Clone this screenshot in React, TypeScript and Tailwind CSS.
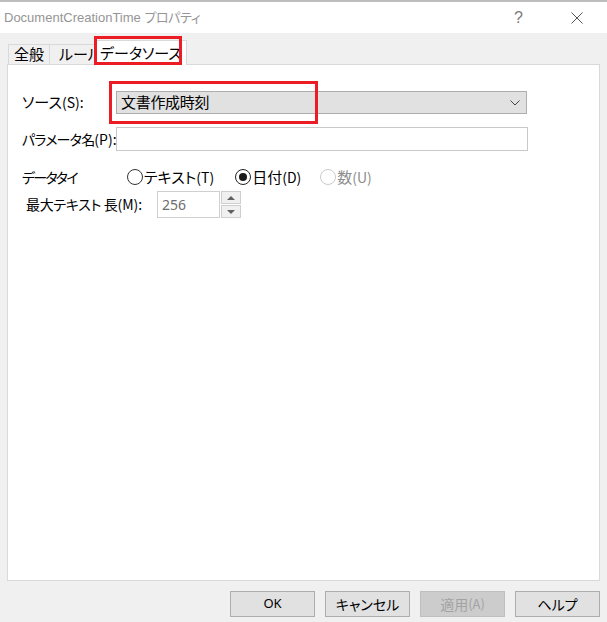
import React from "react";

const jp = "font-['Noto_Sans_CJK_JP','Noto_Sans',sans-serif] [font-feature-settings:'palt']";

function Radio({ checked, disabled, label, k }: { checked?: boolean; disabled?: boolean; label: string; k: string }) {
  return (
    <div className={`flex items-center whitespace-nowrap ${disabled ? "text-[#8d8d8d]" : "text-black"}`}>
      <span
        className={`w-[16px] h-[16px] rounded-full bg-white flex items-center justify-center ${
          disabled ? "border border-[#cccccc]" : checked ? "border-[1.5px] border-[#222222]" : "border border-[#333333]"
        }`}
      >
        {checked && <span className="w-[8px] h-[8px] rounded-full bg-[#1a1a1a]" />}
      </span>
      <span className="ml-[1px]">
        {label}
        <span className="text-[14px]">({k})</span>
      </span>
    </div>
  );
}

function Btn({ children, disabled }: { children: React.ReactNode; disabled?: boolean }) {
  return (
    <div
      className={`w-[85px] h-[26px] border flex items-center justify-center text-[14px] whitespace-nowrap ${
        disabled ? "bg-[#cccccc] border-[#bfbfbf] text-[#a3a3a3]" : "bg-[#e1e1e1] border-[#adadad] text-black"
      }`}
    >
      {children}
    </div>
  );
}

export default function App() {
  return (
    <div className={`relative w-[607px] h-[622px] bg-[#f0f0f0] flex flex-col overflow-hidden ${jp}`}>
      {/* title bar */}
      <div className="h-[33px] bg-white border-t-2 border-[#bdbdbd] flex items-center">
        <span className="ml-[4px] text-[13px] text-[#959595] font-['Liberation_Sans','Noto_Sans_CJK_JP',sans-serif] whitespace-nowrap">
          DocumentCreationTime <span className={`${jp} text-[13px] tracking-[-0.4px]`}>プロパティ</span>
        </span>
        <span className="ml-auto mr-[48px] text-[16px] text-[#7a7a7a] font-['Liberation_Sans',sans-serif]">?</span>
        <svg className="mr-[24px]" width="12" height="12" viewBox="0 0 12 12">
          <path d="M0.5 0.5 L11.5 11.5 M11.5 0.5 L0.5 11.5" stroke="#555" strokeWidth="1" />
        </svg>
      </div>

      {/* tabs */}
      <div className="mt-[7px] pl-[8px] flex items-end h-[24px] text-[15px] whitespace-nowrap">
        <div className="w-[42px] h-[20px] border border-b-0 border-[#d9d9d9] flex items-center justify-center">全般</div>
        <div className="w-[50px] h-[20px] border border-b-0 border-l-0 border-[#d9d9d9] flex items-center pl-[9px] overflow-visible">ルール</div>
        <div className="relative z-10 -ml-[4px] -mb-px w-[91px] h-[25px] bg-white border border-b-0 border-[#d9d9d9] flex items-center pl-[3px]">
          データソース
        </div>
      </div>

      {/* panel */}
      <div className="mx-[7px] h-[517px] bg-white border border-[#d9d9d9] pl-[14px] text-[15px] text-black">
        <div className="mt-[26px] flex items-center h-[23px]">
          <span className="w-[94px] shrink-0 whitespace-nowrap">
            ソース<span className="text-[14px]">(S):</span>
          </span>
          <div className="w-[411px] h-[23px] bg-[#e1e1e1] border border-[#adadad] flex items-center pl-[4px] pr-[6px]">
            <span className="tracking-[-0.3px]">文書作成時刻</span>
            <svg className="ml-auto" width="10" height="6" viewBox="0 0 10 6">
              <path d="M0.5 0.5 L5 5 L9.5 0.5" fill="none" stroke="#444" strokeWidth="1" />
            </svg>
          </div>
        </div>

        <div className="mt-[13px] flex items-center h-[24px]">
          <span className="w-[94px] shrink-0 whitespace-nowrap text-[14px] tracking-[-0.8px]">
            パラメータ名<span className="tracking-normal">(P):</span>
          </span>
          <div className="w-[412px] h-[24px] bg-white border border-[#c9c9c9]" />
        </div>

        <div className="mt-[18px] flex items-center h-[16px]">
          <span className="w-[105px] shrink-0 whitespace-nowrap text-[14px] tracking-[-1.8px]">データタイ</span>
          <Radio label="テキスト" k="T" />
          <div className="ml-[21px]">
            <Radio checked label="日付" k="D" />
          </div>
          <div className="ml-[19px]">
            <Radio disabled label="数" k="U" />
          </div>
        </div>

        <div className="mt-[6px] flex items-center h-[27px]">
          <span className="ml-[4px] w-[131px] shrink-0 whitespace-nowrap text-[14px] tracking-[-0.3px]">
            最大テキスト 長<span className="tracking-normal">(M):</span>
          </span>
          <div className="w-[63px] h-[27px] border border-[#cfcfcf] bg-white flex items-center pl-[4px] text-[#6d6d6d] text-[14px] font-['Noto_Sans',sans-serif]">
            256
          </div>
          <div className="flex flex-col w-[20px] h-[27px] ml-[1px]">
            <div className="h-[13px] border border-[#cfcfcf] bg-[#f0f0f0] flex items-center justify-center">
              <svg width="8" height="4" viewBox="0 0 8 4">
                <path d="M0 4 L4 0 L8 4 Z" fill="#606060" />
              </svg>
            </div>
            <div className="h-[13px] mt-[1px] border border-[#cfcfcf] bg-[#f0f0f0] flex items-center justify-center">
              <svg width="8" height="4" viewBox="0 0 8 4">
                <path d="M0 0 L8 0 L4 4 Z" fill="#606060" />
              </svg>
            </div>
          </div>
        </div>
      </div>

      {/* buttons */}
      <div className="mt-[10px] flex justify-end gap-[10px] pr-[7px]">
        <Btn>
          <span className="font-['Noto_Sans',sans-serif] text-[13px]">OK</span>
        </Btn>
        <Btn>キャンセル</Btn>
        <Btn disabled>
          適用<span className="text-[13px]">(A)</span>
        </Btn>
        <Btn>ヘルプ</Btn>
      </div>

      {/* red annotation boxes */}
      <div className="absolute left-[94px] top-[36px] w-[88px] h-[29px] border-[3px] border-[#ec1c24] pointer-events-none z-20" />
      <div className="absolute left-[109px] top-[81px] w-[209px] h-[43px] border-[3px] border-[#ec1c24] pointer-events-none z-20" />
    </div>
  );
}
